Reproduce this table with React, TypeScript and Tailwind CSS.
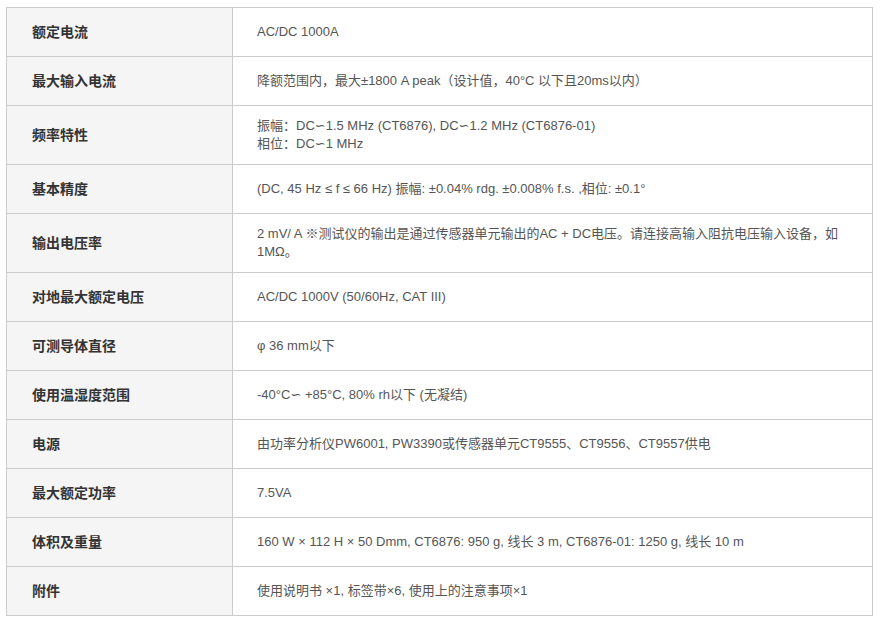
import React from "react";

const rows: [string, string[]][] = [
  ["额定电流", ["AC/DC 1000A"]],
  ["最大输入电流", ["降额范围内，最大±1800 A peak（设计值，40°C 以下且20ms以内）"]],
  ["频率特性", ["振幅：DC∽1.5 MHz (CT6876), DC∽1.2 MHz (CT6876-01)", "相位：DC∽1 MHz"]],
  ["基本精度", ["(DC, 45 Hz ≤ f ≤ 66 Hz) 振幅: ±0.04% rdg. ±0.008% f.s. ,相位: ±0.1°"]],
  [
    "输出电压率",
    ["2 mV/ A ※测试仪的输出是通过传感器单元输出的AC + DC电压。请连接高输入阻抗电压输入设备，如1MΩ。"],
  ],
  ["对地最大额定电压", ["AC/DC 1000V (50/60Hz, CAT III)"]],
  ["可测导体直径", ["φ 36 mm以下"]],
  ["使用温湿度范围", ["-40°C∽ +85°C, 80% rh以下 (无凝结)"]],
  ["电源", ["由功率分析仪PW6001, PW3390或传感器单元CT9555、CT9556、CT9557供电"]],
  ["最大额定功率", ["7.5VA"]],
  ["体积及重量", ["160 W × 112 H × 50 Dmm, CT6876: 950 g, 线长 3 m, CT6876-01: 1250 g, 线长 10 m"]],
  ["附件", ["使用说明书 ×1, 标签带×6, 使用上的注意事项×1"]],
];

// the wave sign renders oddly in Liberation, use DejaVu for it
function Line({ text }: { text: string }) {
  const parts = text.split("∽");
  return (
    <div>
      {parts.map((p, i) => (
        <React.Fragment key={i}>
          {i > 0 && (
            <span className="leading-none" style={{ fontFamily: '"DejaVu Sans", sans-serif' }}>
              ∽
            </span>
          )}
          {p}
        </React.Fragment>
      ))}
    </div>
  );
}

export default function App() {
  return (
    <div
      className="min-h-[624px] bg-white pt-[7px] pl-[6px]"
      style={{ fontFamily: '"Liberation Sans", Arial, "Noto Sans CJK SC", sans-serif' }}
    >
      <table className="w-[867px] border-collapse border border-[#cccccc]">
        <tbody>
          {rows.map(([label, lines]) => (
            <tr key={label} className="h-[49px]">
              <td className="w-[226px] border border-[#cccccc] bg-[#f5f5f5] pl-[25px] pr-3 align-middle text-[14px] font-bold text-[#333333]">
                {label}
              </td>
              <td className="border border-[#cccccc] py-[11px] pl-[24px] pr-4 align-middle text-[13px] leading-[18px] text-[#555555]">
                {lines.map((l) => (
                  <Line key={l} text={l} />
                ))}
              </td>
            </tr>
          ))}
        </tbody>
      </table>
    </div>
  );
}
